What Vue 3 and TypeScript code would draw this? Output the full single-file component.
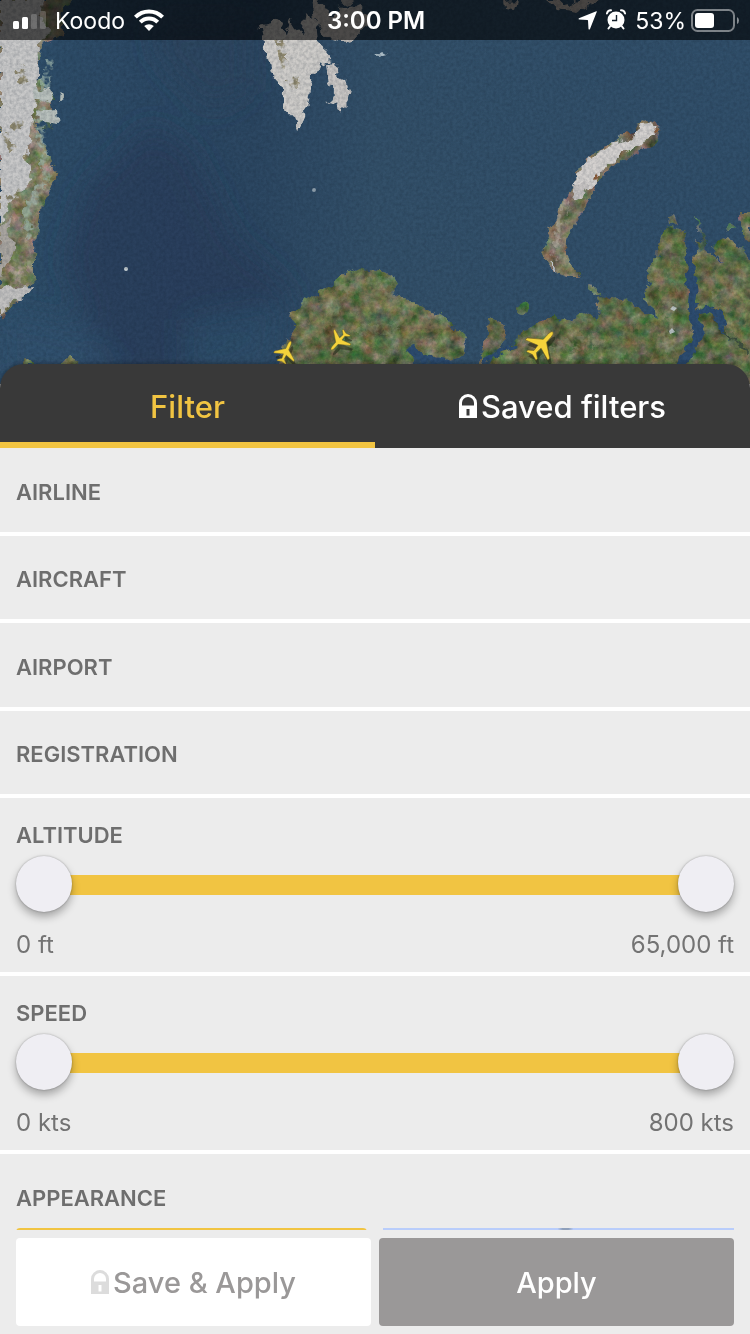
<script setup lang="ts">
import { reactive, ref } from 'vue'

interface RangeFilter {
  id: string
  title: string
  unit: string
  max: number
  step: number
  low: number
  high: number
}

interface Plane {
  x: number
  y: number
  angle: number
  scale: number
}

const activeTab = ref<'filter' | 'saved'>('filter')
const sections: string[] = ['Airline', 'Aircraft', 'Airport', 'Registration']
const ranges = reactive<RangeFilter[]>([
  { id: 'altitude', title: 'Altitude', unit: 'ft', max: 65000, step: 500, low: 0, high: 65000 },
  { id: 'speed', title: 'Speed', unit: 'kts', max: 800, step: 10, low: 0, high: 800 },
])
const planes: Plane[] = [
  { x: 286, y: 352, angle: 24, scale: 0.78 },
  { x: 339, y: 341, angle: 222, scale: 0.78 },
  { x: 542, y: 344, angle: 42, scale: 1.08 },
]

const format = (value: number, unit: string): string => `${value.toLocaleString('en-US')} ${unit}`
const fill = (r: RangeFilter) => ({
  left: `${(r.low / r.max) * 100}%`,
  right: `${100 - (r.high / r.max) * 100}%`,
})
</script>

<template>
  <div class="screen">
    <header class="map">
      <svg class="map-art" viewBox="0 0 750 384" preserveAspectRatio="xMidYMin slice" aria-hidden="true">
        <defs>
          <linearGradient id="sea" x1="0" x2="1" y1="0" y2="0">
            <stop offset="0" stop-color="#2f4f6a" />
            <stop offset="0.18" stop-color="#2d4a66" />
            <stop offset="0.34" stop-color="#2c4762" />
            <stop offset="0.5" stop-color="#335069" />
            <stop offset="1" stop-color="#314f6a" />
          </linearGradient>
          <filter id="soft"><feGaussianBlur stdDeviation="14" /></filter>
          <filter id="grain" x="0" y="0" width="100%" height="100%" color-interpolation-filters="sRGB">
            <feTurbulence type="fractalNoise" baseFrequency="0.3" numOctaves="3" seed="4" />
            <feColorMatrix values="0 0 0 0 0.05  0 0 0 0 0.1  0 0 0 0 0.16  0.9 0 0 0 -0.3" />
          </filter>
          <filter id="terrain" x="-5%" y="-5%" width="110%" height="110%" color-interpolation-filters="sRGB">
            <feTurbulence type="fractalNoise" baseFrequency="0.08" numOctaves="5" seed="7" result="n" />
            <feDisplacementMap in="SourceGraphic" in2="n" scale="12" xChannelSelector="R" yChannelSelector="G" result="d" />
            <feColorMatrix in="n" values="1.2 0.1 0.4 0 -0.33  0.5 0.7 0.4 0 -0.3  0.6 0.2 0.8 0 -0.32  0 0 0 0 1" result="c" />
            <feBlend in="c" in2="d" mode="soft-light" result="b" />
            <feComposite in="b" in2="d" operator="in" />
            <feGaussianBlur stdDeviation="0.6" />
          </filter>
          <filter id="ragged" x="-10%" y="-10%" width="120%" height="120%" color-interpolation-filters="sRGB">
            <feTurbulence type="fractalNoise" baseFrequency="0.11" numOctaves="2" seed="11" result="n" />
            <feDisplacementMap in="SourceGraphic" in2="n" scale="12" xChannelSelector="R" yChannelSelector="G" />
            <feGaussianBlur stdDeviation="0.6" />
          </filter>
          <filter id="mottle" x="-5%" y="-5%" width="110%" height="110%" color-interpolation-filters="sRGB">
            <feTurbulence type="fractalNoise" baseFrequency="0.13" numOctaves="3" seed="23" result="n" />
            <feColorMatrix in="n" values="0 0 0 0 0  0 0 0 0 0  0 0 0 0 0  5 0 0 0 -2.1" result="m" />
            <feDisplacementMap in="SourceGraphic" in2="n" scale="12" xChannelSelector="R" yChannelSelector="G" result="d" />
            <feComposite in="d" in2="m" operator="in" />
            <feGaussianBlur stdDeviation="0.5" />
          </filter>
          <path id="plane" d="M0-15C1.3-15 2-12.5 2-9.5V-4L14 5V7.5L2 3.5L1.5 9.5L6 13V15L0 13.2L-6 15V13L-1.5 9.5L-2 3.5L-14 7.5V5L-2-4V-9.5C-2-12.5-1.3-15 0-15Z" />
        </defs>

        <rect width="750" height="384" fill="url(#sea)" />
        <g filter="url(#soft)">
          <path d="M150 125L190 150L235 240L290 290L270 330L190 384L110 384L65 260L85 190Z" fill="#263d59" opacity="0.7" />
          <path d="M150 20H250V90L210 110L160 60Z" fill="#2b445e" opacity="0.6" />
          <path d="M0 310L90 330L130 384H0Z" fill="#325471" opacity="0.6" />
          <path d="M185 320L290 300L275 384H185Z" fill="#2e4f6b" opacity="0.8" />
        </g>

        <g filter="url(#terrain)">
          <path d="M0 0H72L60 14L66 34L44 42L38 60L36 80L50 92L54 112L50 124L36 122L44 144L50 160L58 174L52 186L42 204L38 230L34 256L34 280L26 294L12 304L0 318Z" fill="#84836b" />
          <path d="M275 378L283 345L296 327L290 315L305 300L320 292L333 283L345 275L360 268L378 270L392 275L397 285L390 292L402 297L412 303L425 308L442 317L455 328L466 338L468 350L458 358L440 362L425 358L412 351L416 378Z" fill="#67734f" />
          <path d="M484 384L490 358L504 350L512 345L517 334L533 324L552 315L558 322L572 319L590 312L596 322L601 308L598 298L606 295L622 298L638 306L650 316L658 322L657 312L645 302L646 290L651 285L645 270L656 260L660 240L665 226L684 230L686 250L692 268L691 258L699 249L697 240L709 252L726 264L716 254L711 246L722 238L734 240L742 249L752 262V384Z" fill="#63714c" />
          <path d="M489 318L503 322L508 332L500 348L486 362L478 372L484 350L488 334Z" fill="#636d4c" />
          <path d="M582 180L600 178L594 190L586 205L577 220L569 235L567 250L571 265L580 277L568 277L556 273L549 264L541 253L547 240L550 228L558 218L562 205L572 188Z" fill="#827d68" />
          <path d="M740 212H752V242L742 236Z" fill="#6f755b" />
          <path d="M668 216L674 213L678 223L669 224Z" fill="#687453" />
          <path d="M588 282L592 284L601 295L596 297L588 290Z" fill="#6a8067" />
          <circle cx="522" cy="309" r="6" fill="#607554" />
          <circle cx="730" cy="228" r="4" fill="#597060" />
          <path d="M695 220L700 224L705 238L702 252L698 252L702 238Z" fill="#597466" />
          <path d="M636 125L655 119L660 124L655 143L634 153L612 167L602 180L588 188L574 184L578 168L594 154L614 143Z" fill="#77705c" />
          <path d="M18 366L26 358L34 366ZM60 366L70 356L84 366Z" fill="#66734f" />
        </g>

        <g filter="url(#mottle)" fill="none">
          <path d="M310 340L330 300L360 290L400 305L440 335M300 355L320 330M520 350L560 335L620 350L650 325M665 250L670 290L665 340M710 275L740 310L735 350" stroke="#957b5c" stroke-width="18" opacity="0.4" />
          <path d="M330 320L350 285L385 280L400 310M350 330L400 330M540 352L590 340L640 360M668 300L672 355M715 300L745 280" stroke="#8a9578" stroke-width="10" opacity="0.4" />
          <path d="M310 372L350 340L395 365M525 370L600 355L650 335L630 370M660 270L680 250M715 360L740 340" stroke="#456b38" stroke-width="18" opacity="0.42" />
          <path d="M42 95L45 130M34 160L46 180M20 205L30 220M14 245L23 285" stroke="#667c39" stroke-width="18" opacity="0.5" />
          <path d="M50 60L40 132L48 175L28 210L32 240" stroke="#a1b8ae" stroke-width="9" opacity="0.7" />
        </g>

        <g filter="url(#ragged)">
          <path d="M0 0H46L40 15L50 32L39 44L38 75L34 105L32 130L26 158L32 178L20 194L8 208L0 225Z" fill="#c8c8c8" />
          <path d="M34 88L48 90L52 98L45 102L35 98ZM36 112L55 110L57 124L38 121ZM61 94L65 98L60 102Z" fill="#b9c1bd" />
          <path d="M0 289L31 286L28 294L12 304L0 316Z" fill="#c2c1c0" />
          <path d="M0 225L10 220L8 235L17 250L5 266L0 280Z" fill="#aaa6a0" />
          <path d="M260 25L265 48L271 72L278 80L285 92L284 108L293 118L299 132L303 118L309 100L313 80L319 65L331 62L327 50L318 42L316 22L306 12L302 32L296 28L290 18L285 34L279 20Z" fill="#ceccc9" />
          <path d="M326 65L336 64L339 76L346 80L351 92L348 103L340 111L337 105L328 103L334 92L329 85Z" fill="#c9c6c4" />
          <path d="M312 -5L324 5L331 16L341 8L356 6L370 14L364 30L352 43L339 40L326 37L315 22Z" fill="#c4c0bd" />
          <path d="M340 -5H356L350 6L342 2Z" fill="#aaa" />
          <path d="M504 1L518 0L515 10L505 9ZM545 0L560 0L568 6L584 -5H604L590 4L578 12L556 9Z" fill="#bcb4ae" />
          <path d="M374 56L381 52L387 55L379 57Z" fill="#aabbc5" />
          <path d="M642 124L653 121L656 130L650 140L632 149L612 160L602 172L590 188L577 192L575 174L588 159L611 146L633 137Z" fill="#d4d1cf" />
          <path d="M576 185L588 184L582 198L576 200L571 195Z" fill="#c6c3c2" />
          <path d="M548 261L552 264L557 272L552 270Z" fill="#c8ccd0" />
        </g>
        <g filter="url(#mottle)" fill="none">
          <path d="M12 130L22 120M14 150L4 135M20 68L26 84M4 202L22 194M281 40L285 70M288 84L300 80" stroke="#79724f" stroke-width="8" opacity="0.75" />
          <path d="M568 200L560 230L554 258" stroke="#b4aca0" stroke-width="8" opacity="0.6" />
          <path d="M594 180L600 176M656 124L658 132" stroke="#8c5d3b" stroke-width="5" />
        </g>

        <g fill="none" stroke="#2d4c6f" stroke-linejoin="round" stroke-linecap="round" filter="url(#ragged)">
          <path d="M692 246L690 268L694 290L691 315L700 330L690 350L681 364" stroke-width="9" />
          <path d="M695 314L708 309L719 314L723 334" stroke-width="6" />
          <path d="M411 350L425 359L450 363" stroke-width="7" />
          <path d="M484 362L500 352L514 347" stroke-width="5" />
          <path d="M724 334L738 343L750 354" stroke="#3f4f3e" stroke-width="2" />
        </g>
        <g fill="#c8d0d4">
          <circle cx="126" cy="269" r="2" />
          <circle cx="314" cy="190" r="2" opacity="0.6" />
          <path d="M670 309L673 306L677 308L674 311ZM669 331L672 328L675 332L670 334Z" opacity="0.9" />
        </g>
        <rect width="750" height="384" filter="url(#grain)" opacity="0.4" />

        <g v-for="(p, i) in planes" :key="i">
          <use href="#plane" :transform="`translate(${p.x + 2} ${p.y + 5}) rotate(${p.angle}) scale(${p.scale})`" fill="#20241a" opacity="0.55" />
          <use href="#plane" :transform="`translate(${p.x} ${p.y}) rotate(${p.angle}) scale(${p.scale})`" fill="#f5d33b" stroke="#6a5a22" stroke-width="0.5" />
        </g>
      </svg>

      <div class="status">
        <div class="status-side">
          <svg width="33" height="18" viewBox="0 0 33 18" fill="#fff" aria-hidden="true">
            <rect y="10" width="6" height="8" rx="1.5" />
            <rect x="9" y="6" width="6" height="12" rx="1.5" />
            <rect x="18" y="3" width="6" height="15" rx="1.5" opacity="0.2" />
            <rect x="27" width="6" height="18" rx="1.5" opacity="0.2" />
          </svg>
          <span class="status-text">Koodo</span>
          <svg width="30" height="22" viewBox="0 0 30 22" aria-hidden="true">
            <g fill="none" stroke="#fff" stroke-width="4">
              <path d="M1.4 8.2A19 19 0 0 1 28.6 8.2" />
              <path d="M6.3 13.2A12 12 0 0 1 23.7 13.2" />
            </g>
            <path d="M10.2 17.1A7 7 0 0 1 19.8 17.1L15 22Z" fill="#fff" />
          </svg>
        </div>
        <strong class="status-text clock">3:00 PM</strong>
        <div class="status-side status-end">
          <svg width="19" height="19" viewBox="0 0 19 19" aria-hidden="true">
            <path d="M18.3.2Q19 0 18.8.8L12 18Q11.2 19 10.5 18L10 9.6Q10 9 9.4 9L1 8.6Q0 8 .9 7.2Z" fill="#fff" />
          </svg>
          <svg width="20" height="22" viewBox="0 0 20 22" aria-hidden="true">
            <circle cx="10" cy="11" r="8.5" fill="#fff" />
            <path d="M1 4.4A4 4 0 0 1 5 1.2M19 4.4A4 4 0 0 0 15 1.2" fill="none" stroke="#fff" stroke-width="2" stroke-linecap="round" />
            <path d="M4 17.500L2.500 19.500M16 17.500L17.500 19.500" stroke="#fff" stroke-width="2" stroke-linecap="round" />
            <path d="M10.500 6V11.500H6" fill="none" stroke="#14202b" stroke-width="1.4" />
          </svg>
          <span class="status-text">53%</span>
          <svg class="battery" width="48" height="23" viewBox="0 0 48 23" aria-hidden="true">
            <rect x="1" y="1" width="42" height="21" rx="5.5" fill="none" stroke="#fff" stroke-opacity="0.45" stroke-width="2" />
            <rect x="4" y="4" width="19" height="15" rx="3" fill="#fff" />
            <path d="M46 8Q48 9 48 11.500Q48 14 46 15Z" fill="#fff" opacity="0.5" />
          </svg>
        </div>
      </div>
    </header>

    <main class="sheet">
      <nav class="tabs" role="tablist">
        <button class="tab" :class="{ active: activeTab === 'filter' }" role="tab" :aria-selected="activeTab === 'filter'" @click="activeTab = 'filter'">Filter</button>
        <button class="tab" :class="{ active: activeTab === 'saved' }" role="tab" :aria-selected="activeTab === 'saved'" @click="activeTab = 'saved'">
          <svg class="lock" viewBox="0 0 18 24" aria-hidden="true">
            <path fill="currentColor" fill-rule="evenodd" d="M0 24V9a9 9 0 0 1 18 0V24ZM3 11.500H15V9A6 6 0 0 0 3 9ZM7.500 15V21.500H10.500V15Z" />
          </svg>
          <span>Saved filters</span>
        </button>
      </nav>

      <div class="list">
        <button v-for="s in sections" :key="s" class="row heading">{{ s }}</button>

        <section v-for="r in ranges" :key="r.id" class="range">
          <h2 class="heading">{{ r.title }}</h2>
          <div class="slider">
            <div class="track"><div class="fill" :style="fill(r)"></div></div>
            <input v-model.number="r.low" type="range" min="0" :max="r.max" :step="r.step" :aria-label="`Minimum ${r.title}`" />
            <input v-model.number="r.high" type="range" min="0" :max="r.max" :step="r.step" :aria-label="`Maximum ${r.title}`" />
          </div>
          <div class="values">
            <output>{{ format(r.low, r.unit) }}</output>
            <output>{{ format(r.high, r.unit) }}</output>
          </div>
        </section>

        <section class="appearance">
          <h2 class="heading">Appearance</h2>
          <div class="tiles">
            <button class="tile selected" aria-label="Highlight matching aircraft"></button>
            <button class="tile preview" aria-label="Show only matching aircraft"></button>
          </div>
        </section>
      </div>

      <footer class="actions">
        <button class="action save">
          <svg class="lock" viewBox="0 0 18 24" aria-hidden="true">
            <path fill="currentColor" fill-rule="evenodd" d="M0 24V9a9 9 0 0 1 18 0V24ZM3 11.500H15V9A6 6 0 0 0 3 9ZM7.500 15V21.500H10.500V15Z" />
          </svg>
          <span>Save &amp; Apply</span>
        </button>
        <button class="action apply">Apply</button>
      </footer>
    </main>
  </div>
</template>

<style>
body {
  margin: 0;
  background: #ececec;
}
</style>

<style scoped>
.screen {
  display: flex;
  flex-direction: column;
  height: 100vh;
  min-height: 1200px;
  overflow: hidden;
  font-family: Inter, "Liberation Sans", sans-serif;
  background: #ececec;
}
.screen * {
  box-sizing: border-box;
}
button {
  margin: 0;
  padding: 0;
  border: 0;
  background: none;
  font: inherit;
  color: inherit;
  cursor: pointer;
}
.map {
  position: relative;
  flex: none;
  height: 384px;
  margin-bottom: -20px;
  overflow: hidden;
}
.map-art {
  display: block;
  width: 100%;
  height: 100%;
}
.status {
  position: absolute;
  inset: 0 0 auto;
  display: grid;
  grid-template-columns: 1fr auto 1fr;
  align-items: center;
  height: 40px;
  padding: 0 11px 0 13px;
  background: rgba(0, 0, 0, 0.62);
  color: #fff;
}
.status-side {
  display: flex;
  align-items: center;
  gap: 9px;
}
.status-end {
  justify-content: flex-end;
}
.status-text {
  padding-top: 2px;
  font-size: 23px;
  line-height: 28px;
}
.battery {
  margin-left: -4px;
}
.clock {
  font-size: 24px;
  font-weight: 600;
}
.sheet {
  position: relative;
  display: flex;
  flex: 1;
  flex-direction: column;
  min-height: 0;
}
.tabs {
  display: flex;
  flex: none;
  height: 84px;
  overflow: hidden;
  border-radius: 24px 24px 0 0;
  background: #393939;
  box-shadow: 0 -1px 4px rgba(0, 0, 0, 0.3);
}
.tab {
  display: flex;
  flex: 1;
  align-items: center;
  justify-content: center;
  gap: 4px;
  border-top: 6px solid transparent;
  border-bottom: 6px solid transparent;
  color: #fff;
  font-size: 31px;
  font-weight: 500;
}
.tab.active {
  border-bottom-color: #f1c442;
  color: #f1c442;
}
.lock {
  width: 18px;
  height: 24px;
}
.list {
  position: relative;
  display: flex;
  flex: 1;
  flex-direction: column;
  min-height: 0;
  overflow: hidden;
  background: #ececec;
}
.heading {
  margin: 0;
  color: #6e6e6e;
  font-size: 22px;
  font-weight: 600;
  line-height: 28px;
  text-align: left;
  text-transform: uppercase;
}
.row {
  flex: 1 0 0;
  padding: 4px 16px 0;
  border-bottom: 4px solid #fff;
}
.range {
  flex: none;
  padding: 23px 16px 13px;
  border-bottom: 4px solid #fff;
}
.slider {
  position: relative;
  height: 56px;
  margin: 7px 0 19px;
}
.track {
  position: absolute;
  inset: 19px 28px 17px;
}
.fill {
  position: absolute;
  inset: 0;
  background: #f1c442;
}
.slider input {
  position: absolute;
  inset: 0;
  width: 100%;
  height: 56px;
  margin: 0;
  appearance: none;
  background: none;
  pointer-events: none;
}
.slider input::-webkit-slider-thumb {
  width: 56px;
  height: 56px;
  appearance: none;
  border-radius: 50%;
  background: #efeef3;
  box-shadow: 0 0 2px rgba(0, 0, 0, 0.3), 0 5px 8px rgba(0, 0, 0, 0.3);
  pointer-events: auto;
}
.values {
  display: flex;
  justify-content: space-between;
  color: #737373;
  font-size: 24px;
  line-height: 28px;
}
.appearance {
  flex: 0 0 76px;
  padding: 30px 16px 0;
  overflow: hidden;
}
.tiles {
  display: grid;
  grid-template-columns: 1fr 1fr;
  gap: 16px;
  margin-top: 16px;
}
.tile {
  height: 120px;
}
.selected {
  border: 4px solid #f1c442;
  border-radius: 4px;
}
.preview {
  background: radial-gradient(circle at 52% 0, #8fa0bb 0, #8fa0bb 3px, #b9cdfb 8px);
}
.actions {
  display: grid;
  flex: none;
  grid-template-columns: 1fr 1fr;
  gap: 8px;
  padding: 8px 16px;
}
.action {
  display: flex;
  align-items: center;
  justify-content: center;
  gap: 4px;
  height: 88px;
  border-radius: 4px;
  font-size: 29px;
  font-weight: 500;
}
.save {
  background: #fff;
  color: #9a9898;
}
.save .lock {
  color: #dcdcdc;
}
.apply {
  background: #9a9898;
  color: #fff;
}
</style>
